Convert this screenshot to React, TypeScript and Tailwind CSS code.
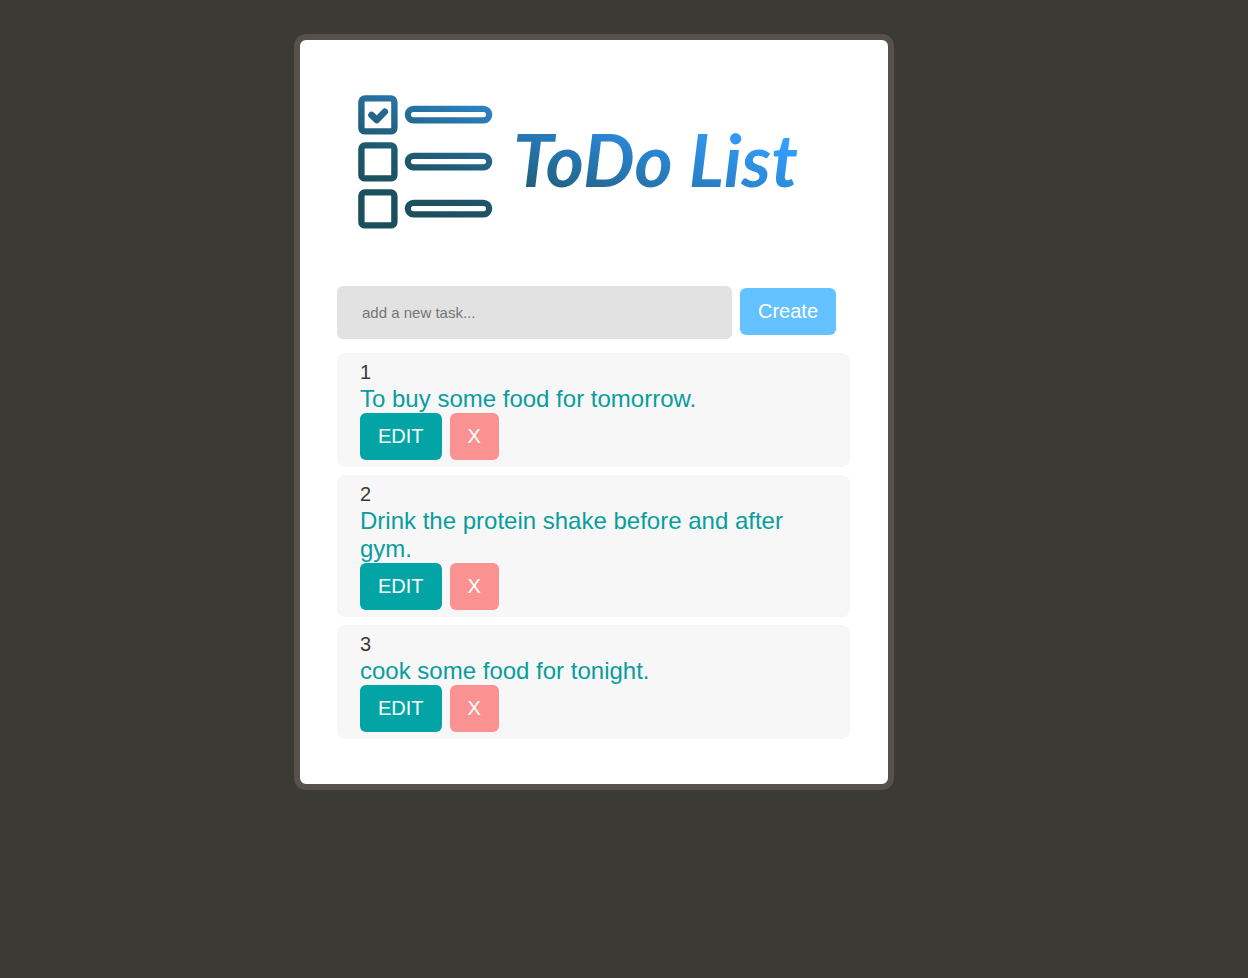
import { useState } from "react";
import type { FormEvent } from "react";

type Task = { id: number; text: string };

const initialTasks: Task[] = [
  { id: 1, text: "To buy some food for tomorrow." },
  { id: 2, text: "Drink the protein shake before and after gym." },
  { id: 3, text: "cook some food for tonight." },
];

const rowOffsets = [0, 47, 94];

function ChecklistIcon() {
  return (
    <svg width="136" height="136" viewBox="0 0 136 136" fill="none" aria-hidden="true" className="shrink-0">
      <defs>
        <linearGradient id="ink" gradientUnits="userSpaceOnUse" x1="62" y1="116" x2="108" y2="-4">
          <stop offset="0" stopColor="#1b4f5c" />
          <stop offset="0.3" stopColor="#1e566a" />
          <stop offset="0.6" stopColor="#23688f" />
          <stop offset="1" stopColor="#2d87cd" />
        </linearGradient>
      </defs>
      <g stroke="url(#ink)">
        {rowOffsets.map((y) => (
          <g key={y}>
            <rect x="4.4" y={y + 3.4} width="33" height="33" rx="3.5" strokeWidth="6.4" />
            <rect x="50.8" y={y + 13.8} width="81.4" height="11.6" rx="5.8" strokeWidth="6.2" />
          </g>
        ))}
        <path d="M14.5 20 19.8 25 27.8 16.7" strokeWidth="6.6" strokeLinejoin="round" strokeLinecap="round" />
      </g>
    </svg>
  );
}

const buttonBase = "h-[47px] cursor-pointer rounded-md px-[18px] pb-0.5 text-xl leading-6 text-white";

function TaskItem({ task, onEdit, onRemove }: { task: Task; onEdit: () => void; onRemove: () => void }) {
  return (
    <li className="rounded-lg bg-[#f7f7f7] px-[23px] py-[7px]">
      <p className="text-xl leading-[25px] text-[#3c3a35]">{task.id}</p>
      <p className="text-2xl leading-7 text-[#0a9d9f]">{task.text}</p>
      <div className="flex gap-2">
        <button type="button" onClick={onEdit} className={`${buttonBase} bg-[#02a4a6]`}>
          EDIT
        </button>
        <button type="button" onClick={onRemove} aria-label={`X, remove task ${task.id}`} className={`${buttonBase} bg-[#fa9292]`}>
          X
        </button>
      </div>
    </li>
  );
}

export default function App() {
  const [tasks, setTasks] = useState(initialTasks);
  const [draft, setDraft] = useState("");

  const create = (event: FormEvent) => {
    event.preventDefault();
    const text = draft.trim();
    if (!text) return;
    setTasks([...tasks, { id: tasks.reduce((max, t) => Math.max(max, t.id), 0) + 1, text }]);
    setDraft("");
  };

  const remove = (id: number) => setTasks(tasks.filter((t) => t.id !== id));

  const edit = (task: Task) => {
    setDraft(task.text);
    remove(task.id);
  };

  return (
    <div className="min-h-screen bg-[#3c3a35] py-[34px] font-['Liberation_Sans',Arial,sans-serif] md:pr-[60px]">
      <main className="mx-auto max-w-[600px] rounded-xl border-6 border-[#56514d] bg-white pr-[38px] pb-[45px] pl-[37px]">
        <header className="flex items-start gap-4 pt-[55px] pb-[55px] pl-5">
          <ChecklistIcon />
          <h1 className="bg-linear-to-tr from-[#1f5f7a] from-10% via-[#2a82cc] via-45% to-[#339fff] to-75% bg-clip-text px-1 pt-5 font-['Lato',sans-serif] text-[73px] leading-[88px] font-bold whitespace-nowrap text-transparent italic">
            ToDo List
          </h1>
        </header>

        <form onSubmit={create} className="flex items-start gap-2 pr-[14px]">
          <input
            type="text"
            aria-label="New task"
            placeholder="add a new task..."
            value={draft}
            onChange={(e) => setDraft(e.target.value)}
            className="h-[53px] min-w-0 flex-1 rounded-md bg-[#e2e2e2] px-[25px] text-[15px] text-[#3c3a35] outline-none placeholder:text-[#757575]"
          />
          <button type="submit" className={`${buttonBase} mt-0.5 bg-[#63c2ff]`}>
            Create
          </button>
        </form>

        <ul className="mt-[14px] flex flex-col gap-2">
          {tasks.map((task) => (
            <TaskItem key={task.id} task={task} onEdit={() => edit(task)} onRemove={() => remove(task.id)} />
          ))}
        </ul>
      </main>
    </div>
  );
}
